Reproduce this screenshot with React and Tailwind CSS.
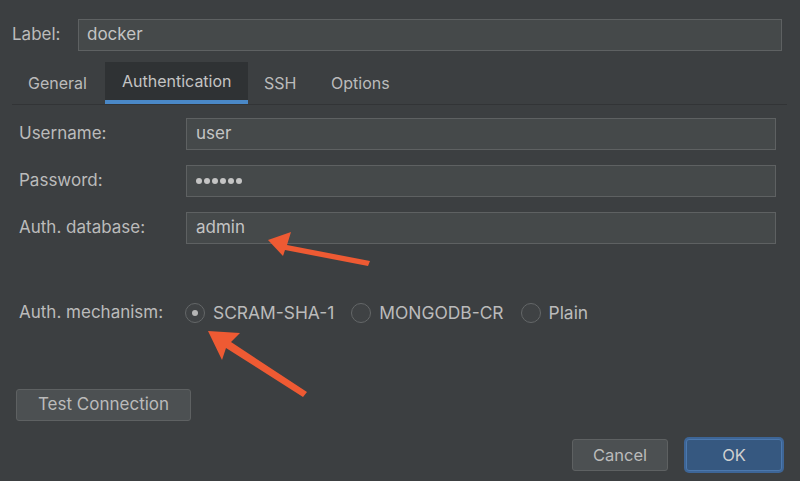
const font = { fontFamily: "Inter, 'Liberation Sans', sans-serif" }

const Field = ({ label, value }) => (
    <div className="flex items-center h-[32px]">
        <div className="w-[167px] text-[17px] text-[#bbbbbb]">{label}</div>
        <div className="flex-1 h-[32px] bg-[#45494a] border border-[#5e6162] flex items-center px-[9px] text-[17px] text-[#c4c4c4]">
            {value}
        </div>
    </div>
)

const Dots = () => (
    <div className="flex gap-[2px]">
        {[0, 1, 2, 3, 4, 5].map(i => (
            <div key={i} className="w-[6px] h-[6px] rounded-full bg-[#c4c4c4]" />
        ))}
    </div>
)

const Radio = ({ checked, label }) => (
    <div className="flex items-center gap-[8px]">
        <div className="w-[20px] h-[20px] rounded-full border border-[#646768] bg-[#3f4244] flex items-center justify-center">
            {checked && <div className="w-[6px] h-[6px] rounded-full bg-[#b5b5b5]" />}
        </div>
        <span className="text-[17.4px] text-[#bbbbbb]">{label}</span>
    </div>
)

const App = () => {
    return (
        <div className="relative w-[800px] h-[481px] bg-[#3c3f41] overflow-hidden flex flex-col" style={font}>
            <div className="flex items-center pt-[19px] pl-[12px] pr-[18px]">
                <span className="w-[66px] text-[17px] text-[#bbbbbb]">Label:</span>
                <div className="flex-1 h-[32px] bg-[#45494a] border border-[#5e6162] flex items-center px-[8px] text-[17px] text-[#c4c4c4]">
                    docker
                </div>
            </div>

            <div className="mt-[11px] ml-[12px] mr-[13px] flex border-b border-[#323436] h-[43px]">
                <div className="w-[93px] pl-[16px] flex items-center text-[16px] text-[#bbbbbb]">General</div>
                <div className="w-[143px] flex flex-col bg-[#2f3234]">
                    <div className="flex-1 pl-[17px] flex items-center text-[16px] text-[#c4c4c4]">Authentication</div>
                    <div className="h-[4px] bg-[#4a88c7]" />
                </div>
                <div className="w-[66px] pl-[16px] flex items-center text-[16px] text-[#bbbbbb]">SSH</div>
                <div className="pl-[17px] flex items-center text-[16px] text-[#bbbbbb]">Options</div>
            </div>

            <div className="flex flex-col gap-[15px] mt-[13px] pl-[19px] pr-[24px]">
                <Field label="Username:" value="user" />
                <Field label="Password:" value={<Dots />} />
                <Field label="Auth. database:" value="admin" />
            </div>

            <div className="flex items-center mt-[58px] pl-[19px] h-[22px]">
                <span className="w-[166px] text-[17px] text-[#bbbbbb]">Auth. mechanism:</span>
                <div className="flex items-center gap-[17px]">
                    <Radio checked label="SCRAM-SHA-1" />
                    <Radio label="MONGODB-CR" />
                    <Radio label="Plain" />
                </div>
            </div>

            <div className="mt-[65px] pl-[16px]">
                <button className="w-[175px] h-[32px] bg-[#4c5052] border border-[#5e6162] rounded-[3px] text-[17px] text-[#bbbbbb]">
                    Test Connection
                </button>
            </div>

            <div className="flex justify-end items-center gap-[18px] mt-[18px] pr-[18px]">
                <button className="w-[96px] h-[32px] bg-[#4c5052] border border-[#5e6162] rounded-[3px] text-[16.5px] text-[#bbbbbb]">
                    Cancel
                </button>
                <button className="w-[96px] h-[32px] bg-[#365880] border border-[#4c78ad] rounded-[3px] ring-2 ring-[#3d6596] text-[16.5px] text-[#d0d0d0]">
                    OK
                </button>
            </div>

            <svg className="absolute inset-0 pointer-events-none" width="800" height="481" viewBox="0 0 800 481">
                <path d="M268 240 L291 232 L287 245 L370 261 L368 266 L285 250 L283 256 Z" fill="#ee5a33" />
                <path d="M208 331 L240 333 L231 342 L307 392 L303 397 L226 348 L222 360 Z" fill="#ee5a33" />
            </svg>
        </div>
    )
}

export default App
